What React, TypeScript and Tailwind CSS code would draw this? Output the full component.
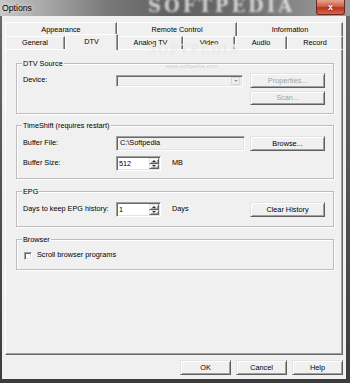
const RAISED =
  "border border-t-[#e3e3e3] border-l-[#e3e3e3] border-r-[#5f5f5f] border-b-[#5f5f5f] shadow-[inset_1px_1px_0_#ffffff,inset_-1px_-1px_0_#a0a0a0]";
const SUNKEN =
  "border border-t-[#a0a0a0] border-l-[#a0a0a0] border-r-white border-b-white shadow-[inset_1px_1px_0_#696969,inset_-1px_-1px_0_#e3e3e3]";

function Button({ label, className, disabled }: { label: string; className: string; disabled?: boolean }) {
  return (
    <div
      className={`flex items-center justify-center bg-[#f0f0f0] leading-none ${RAISED} ${className} ${
        disabled ? "text-[#a3a3a3]" : "text-black"
      }`}
    >
      {label}
    </div>
  );
}

function SpinBox({ value }: { value: string }) {
  return (
    <div className={`flex h-[15px] w-[45px] bg-white ${SUNKEN}`}>
      <span className="flex-1 pl-[2px] pt-[3px] leading-none">{value}</span>
      <div className="flex w-[11px] flex-col py-[1px] pr-[1px]">
        <div className={`flex flex-1 items-center justify-center bg-[#f0f0f0] ${RAISED}`}>
          <span className="h-0 w-0 border-x-[2px] border-b-[2px] border-x-transparent border-b-[#333]" />
        </div>
        <div className={`flex flex-1 items-center justify-center bg-[#f0f0f0] ${RAISED}`}>
          <span className="h-0 w-0 border-x-[2px] border-t-[2px] border-x-transparent border-t-[#333]" />
        </div>
      </div>
    </div>
  );
}

function Group({ title, className, children }: { title: string; className: string; children: React.ReactNode }) {
  return (
    <div
      className={`relative ml-[10px] w-[318px] border border-[#bdbdbd] shadow-[inset_1px_1px_0_#ffffff,1px_1px_0_#ffffff] ${className}`}
    >
      <span className="absolute left-[5px] top-[-5px] bg-[#f0f0f0] px-[1px] leading-[9px]">{title}</span>
      {children}
    </div>
  );
}

const TAB_ROW_1 = [
  { label: "Appearance", w: "w-[112px]" },
  { label: "Remote Control", w: "w-[120px]" },
  { label: "Information", w: "w-[106px]" },
];

const TAB_ROW_2 = [
  { label: "General", w: "w-[60px]" },
  { label: "DTV", w: "w-[53px]", active: true },
  { label: "Analog TV", w: "w-[65px]" },
  { label: "Video", w: "w-[52px]" },
  { label: "Audio", w: "w-[52px]" },
  { label: "Record", w: "w-[56px]" },
];

const TAB =
  "flex items-center justify-center bg-[#f0f0f0] leading-none border-t border-l border-r border-t-white border-l-white border-r-[#696969] shadow-[inset_-1px_0_0_#a0a0a0]";

export default function App() {
  return (
    <div className="relative flex h-[383px] w-[350px] flex-col overflow-hidden bg-[linear-gradient(to_bottom,#6b6b6b,#4d4d4d_60%,#3c3c3c)] font-['Liberation_Sans',Arial,sans-serif] text-[7.3px] text-black">
      {/* Title bar */}
      <div className="relative flex h-[16px] shrink-0 items-center bg-[linear-gradient(to_right,#c6c6c6_0%,#aaaaaa_12%,#7a7a7a_30%,#5f5f5f_50%,#6c6c6c_70%,#8e8e8e_88%,#9c9c9c_100%)]">
        <span className="pl-[2px] text-[8.7px] leading-none text-black [text-shadow:0_0_4px_#ffffff]">Options</span>
        <span className="pointer-events-none absolute left-[148px] top-[-3px] font-['DejaVu_Serif',serif] text-[18px] font-bold leading-none tracking-[3px] text-white/70 blur-[1.2px]">
          SOFTPEDIA
        </span>
        <div className="absolute right-[5px] top-0 flex h-[15px] w-[29px] items-center justify-center rounded-b-[3px] border border-t-0 border-[#6b2a22] bg-[linear-gradient(to_bottom,#e8a391,#d0624a_45%,#b8321c_55%,#d7664a)]">
          <span className="text-[9px] font-bold leading-none text-white [text-shadow:0_0_2px_#5a1a10]">x</span>
        </div>
      </div>

      {/* Client area */}
      <div className="relative ml-[2px] mr-[4px] h-[363px] bg-[#f0f0f0] px-[3px] pt-[6px]">
        {/* Tabs */}
        <div className="flex h-[14px] w-[338px]">
          {TAB_ROW_1.map((t) => (
            <div key={t.label} className={`${TAB} ${t.w} h-[14px]`}>
              {t.label}
            </div>
          ))}
        </div>
        <div className="flex h-[13px] w-[338px] items-end">
          {TAB_ROW_2.map((t) =>
            t.active ? (
              <div key={t.label} className={`${TAB} ${t.w} relative z-10 mb-[-1px] h-[16px] pb-[1px]`}>
                {t.label}
              </div>
            ) : (
              <div key={t.label} className={`${TAB} ${t.w} h-[13px]`}>
                {t.label}
              </div>
            )
          )}
        </div>

        {/* Tab panel */}
        <div className="h-[306px] w-[338px] border border-t-white border-l-white border-r-[#696969] border-b-[#696969] shadow-[inset_-1px_-1px_0_#a0a0a0]">
          <Group title="DTV Source" className="mt-[13px] h-[51px] pt-[9px]">
            <div className="flex h-[15px] items-center">
              <span className="w-[99px] pl-[6px]">Device:</span>
              <div className={`relative flex h-[12px] w-[127px] items-center justify-end bg-[#f0f0f0] ${SUNKEN}`}>
                <div className="mr-[2px] flex h-[8px] w-[9px] items-center justify-center border border-[#d8d8d8]">
                  <span className="h-0 w-0 border-x-[2px] border-t-[2px] border-x-transparent border-t-[#9a9a9a]" />
                </div>
              </div>
              <Button label="Properties..." className="ml-[7px] h-[15px] w-[75px]" disabled />
            </div>
            <div className="mt-[3px] flex">
              <Button label="Scan..." className="ml-[233px] h-[14px] w-[75px]" disabled />
            </div>
          </Group>

          <Group title="TimeShift (requires restart)" className="mt-[11px] h-[54px] pt-[10px]">
            <div className="flex h-[15px] items-center">
              <span className="w-[99px] pl-[6px]">Buffer File:</span>
              <div className={`flex h-[15px] w-[129px] items-center bg-[#f0f0f0] pl-[3px] ${SUNKEN}`}>C:\Softpedia</div>
              <Button label="Browse..." className="ml-[5px] h-[15px] w-[75px]" />
            </div>
            <div className="mt-[5px] flex h-[15px] items-center">
              <span className="w-[99px] pl-[6px]">Buffer Size:</span>
              <SpinBox value="512" />
              <span className="ml-[11px]">MB</span>
            </div>
          </Group>

          <Group title="EPG" className="mt-[12px] h-[36px] pt-[10px]">
            <div className="flex h-[15px] items-center">
              <span className="w-[99px] pl-[6px]">Days to keep EPG history:</span>
              <SpinBox value="1" />
              <span className="ml-[11px] w-[78px]">Days</span>
              <Button label="Clear History" className="h-[15px] w-[75px]" />
            </div>
          </Group>

          <Group title="Browser" className="mt-[12px] h-[31px] pt-[11px]">
            <div className="flex h-[9px] items-center pl-[7px]">
              <div className={`h-[8px] w-[8px] bg-white ${SUNKEN}`} />
              <span className="ml-[5px]">Scroll browser programs</span>
            </div>
          </Group>
        </div>

        {/* Dialog buttons */}
        <div className="mt-[5px] flex w-[338px] justify-end gap-[5px]">
          <Button label="OK" className="h-[15px] w-[51px]" />
          <Button label="Cancel" className="h-[15px] w-[51px]" />
          <Button label="Help" className="h-[15px] w-[51px]" />
        </div>

        {/* Watermarks */}
        <span className="pointer-events-none absolute left-[146px] top-[28px] font-['DejaVu_Serif',serif] text-[12px] leading-none tracking-[2px] text-white/60 [text-shadow:0_0_1px_#d0d0d0]">
          SOFTPEDIA
        </span>
        <span className="pointer-events-none absolute left-[164px] top-[47px] text-[5px] tracking-[0.5px] text-[#cfcfcf]">
          www.softpedia.com
        </span>
      </div>
    </div>
  );
}
